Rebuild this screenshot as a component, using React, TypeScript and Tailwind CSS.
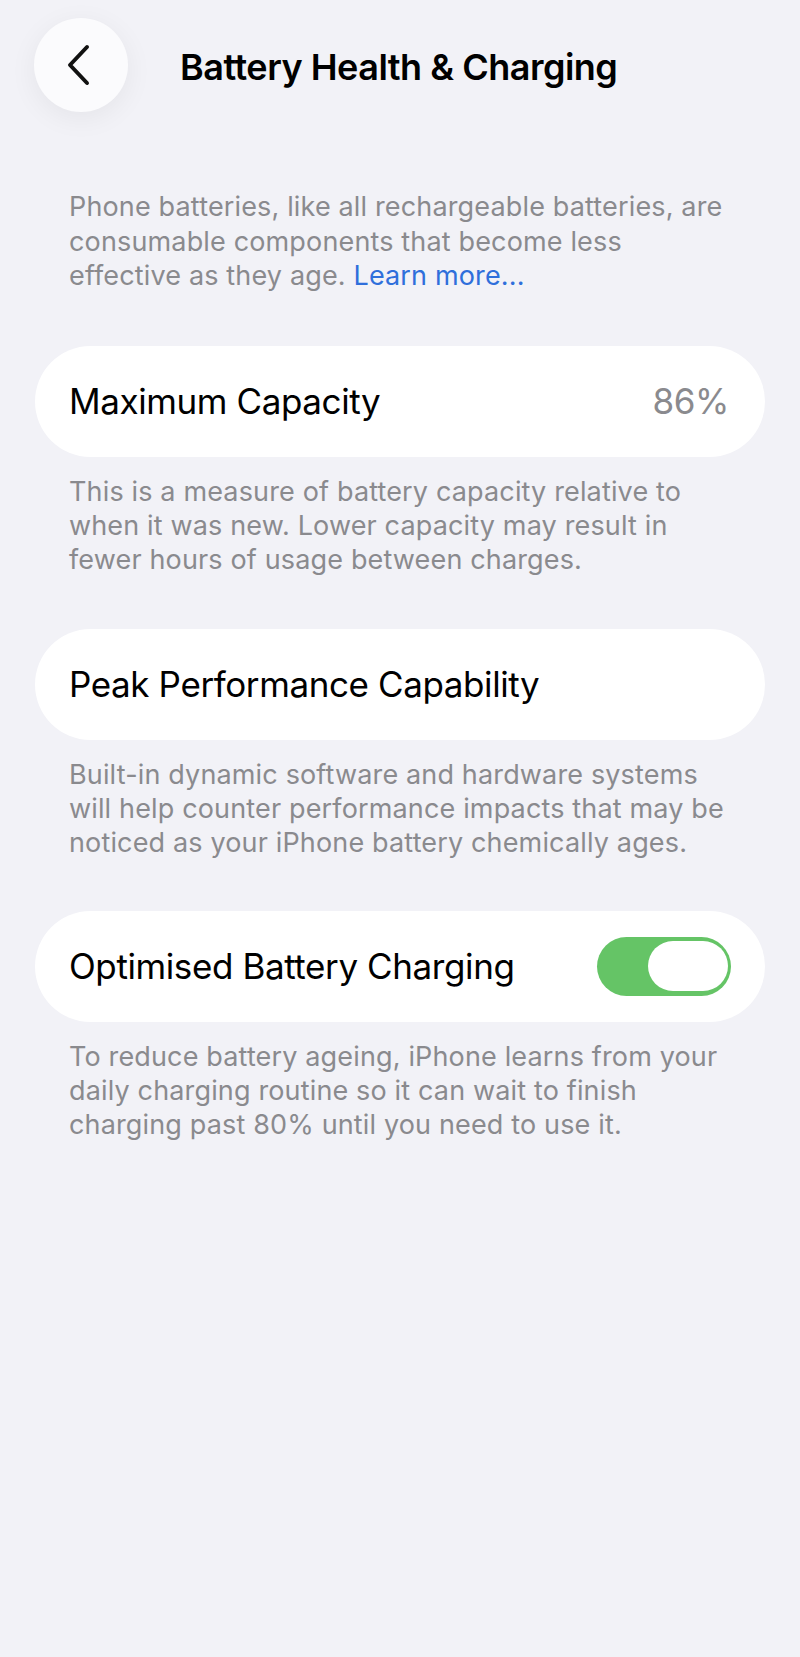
const font = { fontFamily: 'Inter, "Noto Sans", sans-serif' };

const Footer = ({ children }: { children: React.ReactNode }) => (
  <p className="mt-[18px] pl-[69px] pr-[68px] text-[27px] leading-[34px] tracking-[0.15px] text-[#8a8a8e]">
    {children}
  </p>
);

const Card = ({ children }: { children: React.ReactNode }) => (
  <div className="mx-[35px] flex h-[111px] items-center justify-between rounded-full bg-white pl-[34px] pr-[34px]">
    {children}
  </div>
);

const Label = ({ children }: { children: React.ReactNode }) => (
  <span className="text-[35px] tracking-[-0.4px] text-black">{children}</span>
);

const Toggle = () => (
  <div className="flex h-[59px] w-[134px] items-center justify-end rounded-full bg-[#65c466] pr-[3px]">
    <div className="h-[50px] w-[80px] rounded-full bg-white" />
  </div>
);

export default function App() {
  return (
    <div className="min-h-[1657px] w-full bg-[#f2f2f7]" style={font}>
      <header className="flex items-center pl-[34px] pt-[18px]">
        <button className="flex h-[94px] w-[94px] items-center justify-center rounded-full bg-[#fbfbfd] pr-[6px] shadow-[0_6px_28px_rgba(0,0,0,0.06)]">
          <svg width="26" height="42" viewBox="0 0 26 42" fill="none">
            <path
              d="M22 3 L5 21 L22 39"
              stroke="#111"
              strokeWidth="4"
              strokeLinecap="round"
              strokeLinejoin="round"
            />
          </svg>
        </button>
        <h1 className="ml-[52px] pt-[4px] text-[36px] font-semibold tracking-[-0.5px] text-black">
          Battery Health &amp; Charging
        </h1>
      </header>

      <p className="mt-[78px] pl-[69px] pr-[68px] text-[27px] leading-[34.5px] tracking-[0.15px] text-[#8a8a8e]">
        Phone batteries, like all rechargeable batteries, are consumable components that become less
        effective as they age. <span className="text-[#2f6fdb]">Learn more...</span>
      </p>

      <div className="mt-[52px]">
        <Card>
          <Label>Maximum Capacity</Label>
          <span className="pr-[2px] text-[35px] tracking-[-0.4px] text-[#8a8a8e]">86%</span>
        </Card>
        <Footer>
          This is a measure of battery capacity relative to when it was new. Lower capacity may result
          in fewer hours of usage between charges.
        </Footer>
      </div>

      <div className="mt-[52px]">
        <Card>
          <Label>Peak Performance Capability</Label>
        </Card>
        <Footer>
          Built-in dynamic software and hardware systems will help counter performance impacts that may
          be noticed as your iPhone battery chemically ages.
        </Footer>
      </div>

      <div className="mt-[51px]">
        <Card>
          <Label>Optimised Battery Charging</Label>
          <Toggle />
        </Card>
        <Footer>
          To reduce battery ageing, iPhone learns from your daily charging routine so it can wait to
          finish charging past 80% until you need to use it.
        </Footer>
      </div>
    </div>
  );
}
